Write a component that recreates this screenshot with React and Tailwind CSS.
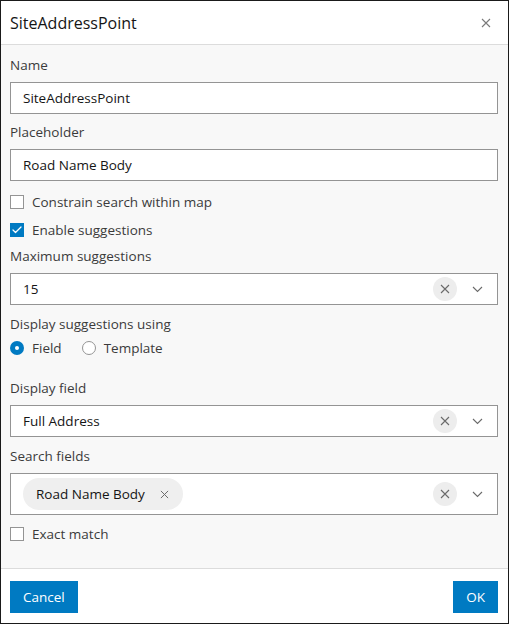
import { Check } from "lucide-react";

const font = { fontFamily: "'Open Sans', 'Noto Sans', sans-serif" };

function XIcon({ size = 10, className = "" }) {
  return (
    <svg width={size} height={size} viewBox="0 0 10 10" className={className}>
      <path d="M1 1 L9 9 M9 1 L1 9" stroke="currentColor" strokeWidth="1.1" fill="none" />
    </svg>
  );
}

function Chevron() {
  return (
    <svg width="11" height="7" viewBox="0 0 11 7" className="text-[#6a6a6a]">
      <path d="M1 1 L5.5 5.5 L10 1" stroke="currentColor" strokeWidth="1.1" fill="none" />
    </svg>
  );
}

function Label({ children, className = "" }) {
  return <div className={`h-5 text-[13.5px] leading-5 text-[#3b3b3b] ${className}`}>{children}</div>;
}

function TextInput({ value, className = "" }) {
  return (
    <div className={`h-8 border border-[#949494] bg-white px-3 flex items-center text-[13.5px] text-[#151515] ${className}`}>
      {value}
    </div>
  );
}

function SelectControls() {
  return (
    <div className="flex items-center">
      <span className="w-6 h-6 rounded-full bg-[#ededed] flex items-center justify-center text-[#6a6a6a]">
        <XIcon size={10} />
      </span>
      <span className="w-10 flex items-center justify-center">
        <Chevron />
      </span>
    </div>
  );
}

function Select({ value, className = "" }) {
  return (
    <div className={`h-8 border border-[#949494] bg-white pl-3 flex items-center justify-between text-[13.5px] text-[#151515] ${className}`}>
      <span>{value}</span>
      <SelectControls />
    </div>
  );
}

function CheckRow({ checked, label, className = "" }) {
  return (
    <div className={`h-[22px] flex items-center gap-2 ${className}`}>
      {checked ? (
        <span className="w-[14px] h-[14px] bg-[#007ac2] flex items-center justify-center text-white">
          <Check size={12} strokeWidth={2.5} />
        </span>
      ) : (
        <span className="w-[14px] h-[14px] border border-[#949494] bg-white" />
      )}
      <span className="text-[13.5px] text-[#3b3b3b]">{label}</span>
    </div>
  );
}

function Radio({ checked, label }) {
  return (
    <div className="flex items-center gap-2">
      {checked ? (
        <span className="w-[14px] h-[14px] rounded-full bg-[#007ac2] flex items-center justify-center">
          <span className="w-1 h-1 rounded-full bg-white" />
        </span>
      ) : (
        <span className="w-[14px] h-[14px] rounded-full border border-[#949494] bg-white" />
      )}
      <span className="text-[13.5px] text-[#3b3b3b]">{label}</span>
    </div>
  );
}

export default function App() {
  return (
    <div className="w-[510px] h-[626px] bg-white" style={font}>
      <div className="w-[509px] h-[624px] border border-[#1a1a1a] flex flex-col">
        <div className="h-[44px] shrink-0 border-b border-[#dcdcdc] bg-white flex items-center justify-between pl-[9px] pr-[17px]">
          <span className="text-[16px] text-[#151515]">SiteAddressPoint</span>
          <XIcon size={10} className="text-[#7a7a7a]" />
        </div>

        <div className="flex-1 bg-[#f8f8f8] pl-[9px] pr-[10px] pt-[10px] flex flex-col">
          <Label>Name</Label>
          <TextInput value="SiteAddressPoint" className="mt-[7px]" />
          <Label className="mt-2">Placeholder</Label>
          <TextInput value="Road Name Body" className="mt-[7px]" />
          <CheckRow label="Constrain search within map" className="mt-[10px]" />
          <CheckRow checked label="Enable suggestions" className="mt-[6px]" />
          <Label className="mt-[5px]">Maximum suggestions</Label>
          <Select value="15" className="mt-[7px]" />
          <Label className="mt-[9px]">Display suggestions using</Label>
          <div className="mt-1 h-5 flex items-center gap-5">
            <Radio checked label="Field" />
            <Radio label="Template" />
          </div>
          <Label className="mt-5">Display field</Label>
          <Select value="Full Address" className="mt-[7px]" />
          <Label className="mt-[9px]">Search fields</Label>
          <div className="mt-[7px] h-[42px] border border-[#949494] bg-white pl-3 flex items-center justify-between">
            <span className="h-8 rounded-full bg-[#efefef] pl-[13px] pr-[14px] flex items-center gap-[15px] text-[13.5px] text-[#151515]">
              Road Name Body
              <XIcon size={9} className="text-[#6a6a6a]" />
            </span>
            <SelectControls />
          </div>
          <CheckRow label="Exact match" className="mt-2" />
        </div>

        <div className="h-[55px] shrink-0 border-t border-[#dcdcdc] bg-white flex items-start justify-between pl-[9px] pr-[10px] pt-[12px]">
          <button className="h-8 px-[13px] bg-[#007ac2] text-white text-[13.5px]">Cancel</button>
          <button className="h-8 px-[13px] bg-[#007ac2] text-white text-[13.5px]">OK</button>
        </div>
      </div>
    </div>
  );
}
